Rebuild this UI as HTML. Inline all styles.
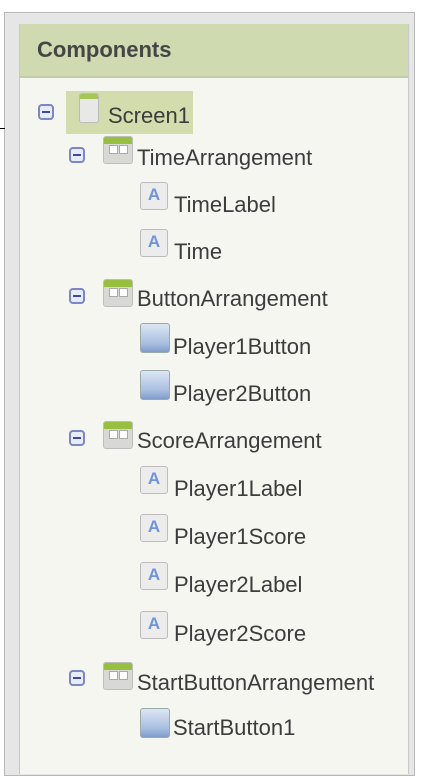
<!DOCTYPE html>
<html><head><style>
body{margin:0;width:426px;height:782px;background:#fff;position:relative;overflow:hidden;font-family:"Liberation Sans",sans-serif;}
.frame{position:absolute;left:4px;top:12px;width:409px;height:762px;background:#e6e6e6;border:1px solid #b8b8b8;}
.panel{position:absolute;left:19px;top:24px;width:388px;height:750px;background:#f6f6f1;border-left:1px solid #c8c8c8;border-right:1px solid #c8c8c8;}
.hdr{position:absolute;left:0;top:0;width:388px;height:52px;background:#cfdab0;border-bottom:2px solid #c4cba8;}
.hdr span{position:absolute;left:17px;top:13px;font-weight:bold;font-size:22px;color:#454545;}
.row{position:absolute;font-size:22px;color:#3c3c3c;white-space:nowrap;}
.minus{position:absolute;width:12px;height:12px;border:2px solid #7a86c6;border-radius:4px;background:#e8ebf8;}
.minus:after{content:"";position:absolute;left:2px;top:5px;width:8px;height:2px;background:#3a48b0;}
.arr{position:absolute;width:28px;height:26px;border:1px solid #bdbdbd;border-radius:3px;background:#d8d8d4;overflow:hidden;}
.arr:before{content:"";position:absolute;left:0;top:0;width:28px;height:7px;background:#97c040;}
.arr i{position:absolute;top:8px;width:7px;height:7px;background:#fff;border:1px solid #aaa;}
.btn{position:absolute;width:28px;height:28px;border:1px solid #9aa;border-radius:3px;background:linear-gradient(#dce6f4,#a8bedf 70%,#7f9ccc);}
.lbl{position:absolute;width:26px;height:26px;border:1px solid #bcbcbc;border-radius:3px;background:#ececec;color:#6f95d8;font-weight:bold;font-size:17px;text-align:center;line-height:24px;}
.scr{position:absolute;width:18px;height:28px;border:1px solid #bbb;border-radius:3px;background:#e8e8e6;overflow:hidden;}
.scr:before{content:"";position:absolute;left:0;top:0;width:18px;height:5px;background:#a5c75a;}
</style></head><body>
<div class="frame"></div>
<div style="position:absolute;left:0;top:128px;width:5px;height:1px;background:#000"></div>
<div class="panel">
<div class="hdr"><span>Components</span></div>
</div>
<div style="position:absolute;left:66px;top:91px;width:127px;height:43px;background:#d3dcad"></div>
<div class="minus" style="left:38px;top:104px"></div>
<div class="scr" style="left:79px;top:93px"></div>
<div class="row" style="left:108px;top:103px">Screen1</div>

<div class="minus" style="left:69px;top:147px"></div>
<div class="arr" style="left:103px;top:136px"><i style="left:5px"></i><i style="left:15px"></i></div>
<div class="row" style="left:137px;top:145px">TimeArrangement</div>
<div class="lbl" style="left:140px;top:182px">A</div><div class="row" style="left:174px;top:192px">TimeLabel</div>
<div class="lbl" style="left:140px;top:229px">A</div><div class="row" style="left:174px;top:239px">Time</div>

<div class="minus" style="left:69px;top:288px"></div>
<div class="arr" style="left:103px;top:279px"><i style="left:5px"></i><i style="left:15px"></i></div>
<div class="row" style="left:137px;top:286px">ButtonArrangement</div>
<div class="btn" style="left:140px;top:323px"></div><div class="row" style="left:173px;top:334px">Player1Button</div>
<div class="btn" style="left:140px;top:370px"></div><div class="row" style="left:173px;top:381px">Player2Button</div>

<div class="minus" style="left:69px;top:430px"></div>
<div class="arr" style="left:103px;top:421px"><i style="left:5px"></i><i style="left:15px"></i></div>
<div class="row" style="left:137px;top:428px">ScoreArrangement</div>
<div class="lbl" style="left:140px;top:466px">A</div><div class="row" style="left:174px;top:476px">Player1Label</div>
<div class="lbl" style="left:140px;top:514px">A</div><div class="row" style="left:174px;top:524px">Player1Score</div>
<div class="lbl" style="left:140px;top:562px">A</div><div class="row" style="left:174px;top:572px">Player2Label</div>
<div class="lbl" style="left:140px;top:611px">A</div><div class="row" style="left:174px;top:621px">Player2Score</div>

<div class="minus" style="left:69px;top:670px"></div>
<div class="arr" style="left:103px;top:662px"><i style="left:5px"></i><i style="left:15px"></i></div>
<div class="row" style="left:137px;top:670px">StartButtonArrangement</div>
<div class="btn" style="left:140px;top:708px"></div><div class="row" style="left:173px;top:715px">StartButton1</div>
</body></html>
